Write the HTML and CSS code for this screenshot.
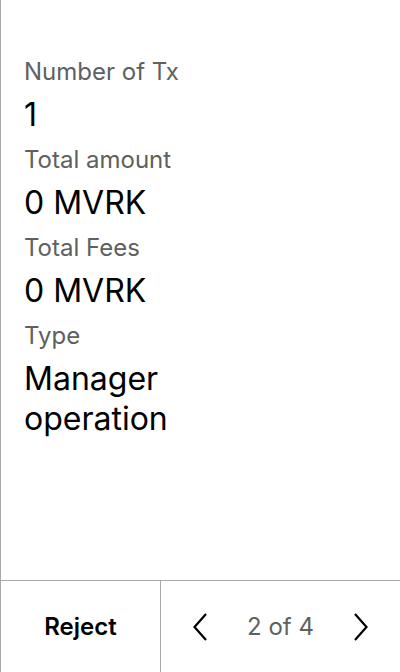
FILE: index.html
```html
<!DOCTYPE html>
<html>
<head>
<meta charset="utf-8">
<link rel="stylesheet" href="styles.css">
</head>
<body>
<div class="screen">
  <main class="content">
    <div class="field">
      <div class="label">Number of Tx</div>
      <div class="value">1</div>
    </div>
    <div class="field">
      <div class="label">Total amount</div>
      <div class="value">0 MVRK</div>
    </div>
    <div class="field">
      <div class="label">Total Fees</div>
      <div class="value">0 MVRK</div>
    </div>
    <div class="field">
      <div class="label">Type</div>
      <div class="value">Manager<br>operation</div>
    </div>
  </main>
  <footer class="footer">
    <div class="reject">Reject</div>
    <div class="pager">
      <svg class="chev" width="14" height="28" viewBox="0 0 14 28"><path d="M13 1 L1.5 14 L13 27" fill="none" stroke="#000" stroke-width="2.2"/></svg>
      <span class="page">2 of 4</span>
      <svg class="chev" width="14" height="28" viewBox="0 0 14 28"><path d="M1 1 L12.5 14 L1 27" fill="none" stroke="#000" stroke-width="2.2"/></svg>
    </div>
  </footer>
</div>
</body>
</html>
```
FILE: styles.css
```css
html, body {
  margin: 0;
  padding: 0;
  background: #fff;
}
.screen {
  box-sizing: border-box;
  width: 400px;
  height: 672px;
  border-left: 1px solid #a8a8a8;
  display: flex;
  flex-direction: column;
  font-family: Inter, "Noto Sans", sans-serif;
  color: #000;
}
.content {
  flex: 1;
  padding: 56px 23px 0 23px;
}
.field {
  margin-bottom: 9px;
}
.label {
  font-size: 24px;
  line-height: 32px;
  color: #606060;
  margin-bottom: 7px;
}
.value {
  font-size: 32px;
  line-height: 40px;
  color: #000;
}
.footer {
  height: 92px;
  border-top: 1px solid #a8a8a8;
  box-sizing: border-box;
  display: flex;
}
.reject {
  width: 159px;
  border-right: 1px solid #a8a8a8;
  display: flex;
  align-items: center;
  justify-content: center;
  font-size: 24px;
  font-weight: 600;
}
.pager {
  flex: 1;
  display: flex;
  align-items: center;
  justify-content: center;
  gap: 40px;
}
.page {
  font-size: 24px;
  color: #606060;
}
.chev {
  display: block;
}
```
